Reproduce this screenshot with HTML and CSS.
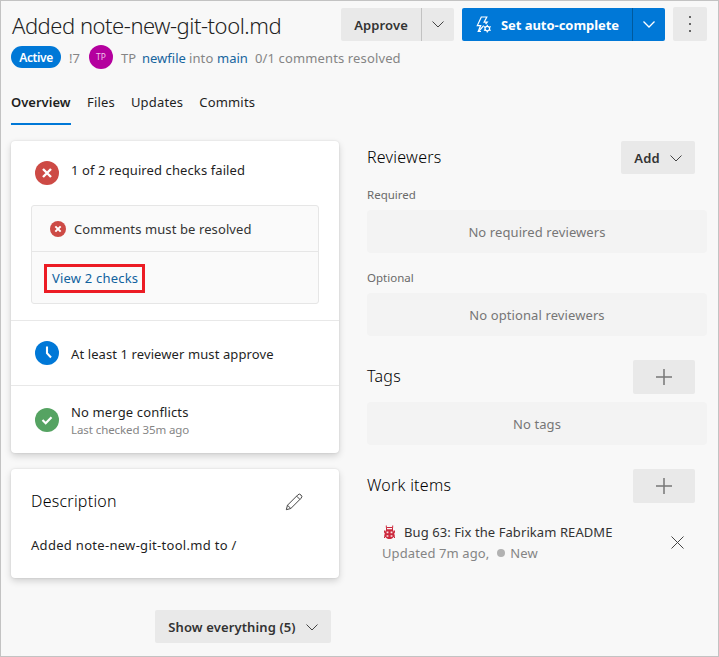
FILE: index.html
```
<!DOCTYPE html>
<html lang="en">
<head>
<meta charset="utf-8">
<title>Added note-new-git-tool.md</title>
<link rel="stylesheet" href="styles.css">
</head>
<body>
<div class="page">
  <header class="header">
    <h1 class="title">Added note-new-git-tool.md</h1>
    <div class="actions">
      <div class="split">
        <button class="btn approve">Approve</button>
        <button class="btn arrow"><svg class="chevron" width="12" height="7" viewBox="0 0 12 7"><path d="M.5.5 6 6 11.5.5"/></svg></button>
      </div>
      <div class="split primary">
        <button class="btn complete">
          <svg class="bolt" width="16" height="17" viewBox="0 0 16 17"><path d="M5 15.5H2.2L4.7 9.6H1.3L5.3 1H10.8L8.1 6.2H11.2L9.6 8"/><path d="M7.7 9.7 2.5 15.5"/><circle cx="11.3" cy="12.6" r="2.3"/><path d="M11.3 8.7v1.6M11.3 14.9v1.6M7.9 10.6l1.4.8M13.3 13.8l1.4.8M7.9 14.6l1.4-.8M13.3 11.4l1.4-.8"/></svg>
          <span>Set auto-complete</span>
        </button>
        <button class="btn arrow"><svg class="chevron" width="12" height="7" viewBox="0 0 12 7"><path d="M.5.5 6 6 11.5.5"/></svg></button>
      </div>
      <button class="btn more"><i></i><i></i><i></i></button>
    </div>
  </header>

  <div class="meta">
    <span class="pill">Active</span>
    <span class="number">!7</span>
    <span class="avatar">TP</span>
    <span class="author">TP</span>
    <a class="branch source">newfile</a>
    <span class="into">into</span>
    <a class="branch target">main</a>
    <span class="comments">0/1 comments resolved</span>
  </div>

  <nav class="tabs">
    <a class="tab active">Overview</a>
    <a class="tab">Files</a>
    <a class="tab">Updates</a>
    <a class="tab">Commits</a>
  </nav>

  <div class="columns">
    <main class="left">
      <section class="card checks">
        <div class="failed">
          <div class="check-row">
            <svg class="status" width="24" height="24" viewBox="0 0 24 24"><circle cx="12" cy="12" r="12" fill="#cd4a45"/><path d="m8 8 8 8M16 8l-8 8" stroke="#fff" stroke-width="2.4"/></svg>
            <span class="failed-label">1 of 2 required checks failed</span>
          </div>
          <div class="details">
            <div class="detail">
              <svg width="16" height="16" viewBox="0 0 24 24"><circle cx="12" cy="12" r="12" fill="#cd4a45"/><path d="m8 8 8 8M16 8l-8 8" stroke="#fff" stroke-width="3"/></svg>
              <span>Comments must be resolved</span>
            </div>
            <div class="view"><a class="view-link">View 2 checks</a></div>
          </div>
        </div>
        <div class="check-row review">
          <svg class="status" width="24" height="24" viewBox="0 0 24 24"><circle cx="12" cy="12" r="12" fill="#0078d7"/><path d="M12 5.500v6.700l4 4.300" fill="none" stroke="#fff" stroke-width="2.1"/></svg>
          <span>At least 1 reviewer must approve</span>
        </div>
        <div class="check-row merge">
          <svg class="status" width="24" height="24" viewBox="0 0 24 24"><circle cx="12" cy="12" r="12" fill="#55a362"/><path d="m7.500 12 3.200 3.200 5.800-6" fill="none" stroke="#fff" stroke-width="2.2"/></svg>
          <div class="merge-text"><span class="merge-title">No merge conflicts</span><small>Last checked 35m ago</small></div>
        </div>
      </section>

      <section class="card description">
        <div class="description-head">
          <h2>Description</h2>
          <svg class="pencil" width="18" height="18" viewBox="0 0 18 18"><path d="m1.300 16.700 1.200-4.500L12.700 2a2.200 2.200 0 0 1 3.300 0 2.200 2.200 0 0 1 0 3.300L5.800 15.500z"/><path d="m11.600 3.100 3.300 3.300M2.500 12.200l3.300 3.300"/></svg>
        </div>
        <p>Added note-new-git-tool.md to /</p>
      </section>

      <button class="btn show"><span>Show everything (5)</span><svg class="chevron" width="12" height="7" viewBox="0 0 12 7"><path d="M.5.5 6 6 11.5.5"/></svg></button>
    </main>

    <aside class="right">
      <div class="side-head">
        <h2>Reviewers</h2>
        <button class="btn add"><span>Add</span><svg class="chevron" width="12" height="7" viewBox="0 0 12 7"><path d="M.5.5 6 6 11.5.5"/></svg></button>
      </div>
      <h3>Required</h3>
      <div class="empty">No required reviewers</div>
      <h3 class="optional">Optional</h3>
      <div class="empty">No optional reviewers</div>

      <div class="side-head tags">
        <h2>Tags</h2>
        <button class="btn plus"><svg width="16" height="16" viewBox="0 0 16 16"><path d="M8 0v16M0 8h16"/></svg></button>
      </div>
      <div class="empty no-tags">No tags</div>

      <div class="side-head work">
        <h2>Work items</h2>
        <button class="btn plus"><svg width="16" height="16" viewBox="0 0 16 16"><path d="M8 0v16M0 8h16"/></svg></button>
      </div>
      <div class="item">
        <div class="item-text">
          <div class="item-title">
            <svg width="13" height="15" viewBox="0 0 13 15"><path d="M3.300.5v2h6.400v-2M3.500 2.500v2.500M9.500 2.500v2.500M1.500 5.500v2.200h10V5.500M1 10.200h11M1.500 13v-1.500h10V13" fill="none" stroke="#cc293d"/><path d="M4 4.200h5c1.500 1 2.300 2.600 2.300 4.700 0 3-1.800 5.200-4.800 5.200s-4.800-2.200-4.800-5.200C1.700 6.800 2.500 5.200 4 4.200z" fill="#cc293d"/><path d="M3.600 6.600h1.800v1.600H3.600zM7.600 6.600h1.800v1.600H7.600zM3.600 10.200h1.800v1.600H3.600zM7.600 10.200h1.800v1.600H7.600z" fill="#fbe4e6"/></svg>
            <span>Bug 63: Fix the Fabrikam README</span>
          </div>
          <div class="item-meta"><span>Updated 7m ago,</span><i class="dot"></i><span class="state">New</span></div>
        </div>
        <svg class="close" width="13" height="13" viewBox="0 0 13 13"><path d="m.5.5 12 12M12.500.5l-12 12"/></svg>
      </div>
    </aside>
  </div>
</div>
</body>
</html>
```
FILE: styles.css
```
* { box-sizing: border-box; }

body {
  margin: 0;
  background: #f8f8f8;
  color: #1f1f1f;
  font: 13px/20px "Noto Sans", "Open Sans", sans-serif;
  letter-spacing: 0.1px;
}

h1, h2, h3, p { margin: 0; font-weight: 400; }
svg { display: block; flex: none; }

.page {
  width: 719px;
  height: 657px;
  border: 1px solid #c3c3c3;
  padding: 6px 11px 0 10px;
  overflow: hidden;
}

.header {
  display: flex;
  justify-content: space-between;
  height: 36px;
}

.title {
  margin-left: 1px;
  font-size: 22px;
  font-weight: 300;
  line-height: 36px;
  letter-spacing: -0.47px;
  white-space: nowrap;
}

.actions { display: flex; gap: 8px; }
.split { display: flex; margin-top: 1px; height: 33px; }

.btn {
  display: flex;
  align-items: center;
  justify-content: center;
  border: 0;
  border-radius: 2px;
  padding: 0;
  background: #e9e9e9;
  color: #333;
  font: inherit;
  font-weight: 600;
  letter-spacing: 0.12px;
  white-space: nowrap;
}

.chevron { fill: none; stroke: #444; stroke-width: 1; }
.approve { width: 80px; border-radius: 2px 0 0 2px; }
.arrow { width: 33px; border-left: 1px solid #c2c2c2; border-radius: 0 2px 2px 0; }
.primary .btn { background: #0078d7; color: #fff; }
.primary .complete { width: 170px; gap: 9px; border-radius: 2px 0 0 2px; padding-left: 1px; font-weight: 700; letter-spacing: -0.05px; }
.primary .arrow { border-left-color: #005a9e; }
.primary .chevron { stroke: #fff; stroke-width: 1.3; }
.bolt { fill: none; stroke: #fff; stroke-width: 1.2; }
.more { flex-direction: column; gap: 5px; width: 34px; height: 34px; }
.more i { width: 2px; height: 2px; background: #666; }

.meta {
  display: flex;
  align-items: center;
  height: 26px;
  margin-top: 1px;
  color: #858585;
  white-space: nowrap;
}

.pill {
  width: 50px;
  height: 22px;
  border-radius: 11px;
  background: #0078d7;
  color: #fff;
  font-size: 12px;
  font-weight: 600;
  line-height: 23px;
  letter-spacing: -0.4px;
  text-align: center;
}

.number, .author, .branch, .into, .comments { padding-top: 2px; }
.number { width: 28px; padding-left: 8px; }

.avatar {
  width: 24px;
  height: 24px;
  border-radius: 50%;
  background: #b4009e;
  color: #f0c4ea;
  font-size: 8.5px;
  line-height: 24px;
  text-align: center;
}

.author { width: 21px; margin-left: 8px; }
.branch { color: #16659e; letter-spacing: 0; }
.source { width: 47px; }
.into { width: 28px; }
.target { width: 38px; }
.comments { letter-spacing: 0.13px; }

.tabs { display: flex; gap: 16px; height: 42px; margin-top: 13px; }
.tab { height: 42px; line-height: 38px; letter-spacing: 0.18px; }
.tab.active { width: 60px; border-bottom: 2px solid #0078d7; font-weight: 600; letter-spacing: 0; }

.columns { display: flex; gap: 28px; margin-top: 16px; }
.left { width: 328px; }
.right { width: 340px; }

.card {
  border-radius: 4px;
  background: #fff;
  box-shadow: 0 3px 7px rgba(0, 0, 0, 0.16), 0 0 2px rgba(0, 0, 0, 0.12);
}

.checks { height: 312px; }
.failed { height: 180px; border-bottom: 1px solid #e8e8e8; padding: 20px 20px 0; }
.check-row { display: flex; gap: 12px; }
.failed .check-row { height: 44px; padding-left: 4px; }
.failed-label { line-height: 19px; }

.details { height: 99px; border: 1px solid #e6e6e6; border-radius: 3px; background: #fafafa; }
.detail { display: flex; align-items: center; gap: 8px; height: 46px; border-bottom: 1px solid #e6e6e6; padding-left: 18px; color: #333; }
.view { padding: 12px; }
.view-link { display: block; width: 101px; height: 29px; border: 3px solid #ec1c24; color: #10629e; letter-spacing: 0.2px; line-height: 23px; padding-left: 5px; white-space: nowrap; }

.review { align-items: center; height: 65px; border-bottom: 1px solid #e8e8e8; padding-left: 24px; }
.review span { padding-top: 1px; }
.merge { height: 67px; padding: 22px 24px 0; }
.merge-text { display: flex; flex-direction: column; margin-top: -6px; }
.merge-title { line-height: 20px; letter-spacing: 0.14px; }
.merge small { color: #858585; font-size: 11.5px; line-height: 16px; letter-spacing: -0.08px; }

.description { height: 109px; margin-top: 16px; padding: 20px 36px 0 20px; }
.description-head { display: flex; justify-content: space-between; height: 46px; }
h2 { color: #000; font-size: 16px; font-weight: 300; line-height: 24px; letter-spacing: 0.25px; }
.pencil { margin-top: 4px; fill: none; stroke: #444; stroke-width: 1; }
.description p { letter-spacing: 0.3px; }

.show { width: 176px; height: 33px; margin: 32px 0 0 144px; gap: 10px; }
.show svg, .add svg { margin-top: 1px; }

.side-head { display: flex; justify-content: space-between; height: 34px; padding-right: 12px; }
.side-head h2 { line-height: 32px; }
.add { width: 74px; height: 33px; gap: 10px; }
.plus { width: 62px; height: 34px; }
.plus svg { stroke: #777; stroke-width: 1.5; }
h3 { height: 20px; margin-top: 10px; color: #6a6a6a; font-size: 11.5px; line-height: 20px; letter-spacing: 0; }
.empty { height: 43px; margin-top: 5px; border-radius: 4px; background: #f3f3f3; color: #767676; line-height: 44px; text-align: center; }
h3.optional { margin-top: 15px; }
.tags { margin-top: 24px; }
.no-tags { margin-top: 8px; }
.work { margin-top: 24px; }

.item { display: flex; justify-content: space-between; height: 50px; margin-top: 19px; padding: 0 23px 0 15px; }
.item-title { display: flex; align-items: center; gap: 8px; height: 20px; padding-left: 1px; color: #333; letter-spacing: 0.08px; }
.item-meta { display: flex; align-items: center; height: 20px; margin-top: 1px; color: #858585; }
.dot { width: 8px; height: 8px; margin: 0 5px 0 8px; border-radius: 50%; background: #b2b2b2; }
.close { margin-top: 14px; fill: none; stroke: #444; stroke-width: 1; }
```
